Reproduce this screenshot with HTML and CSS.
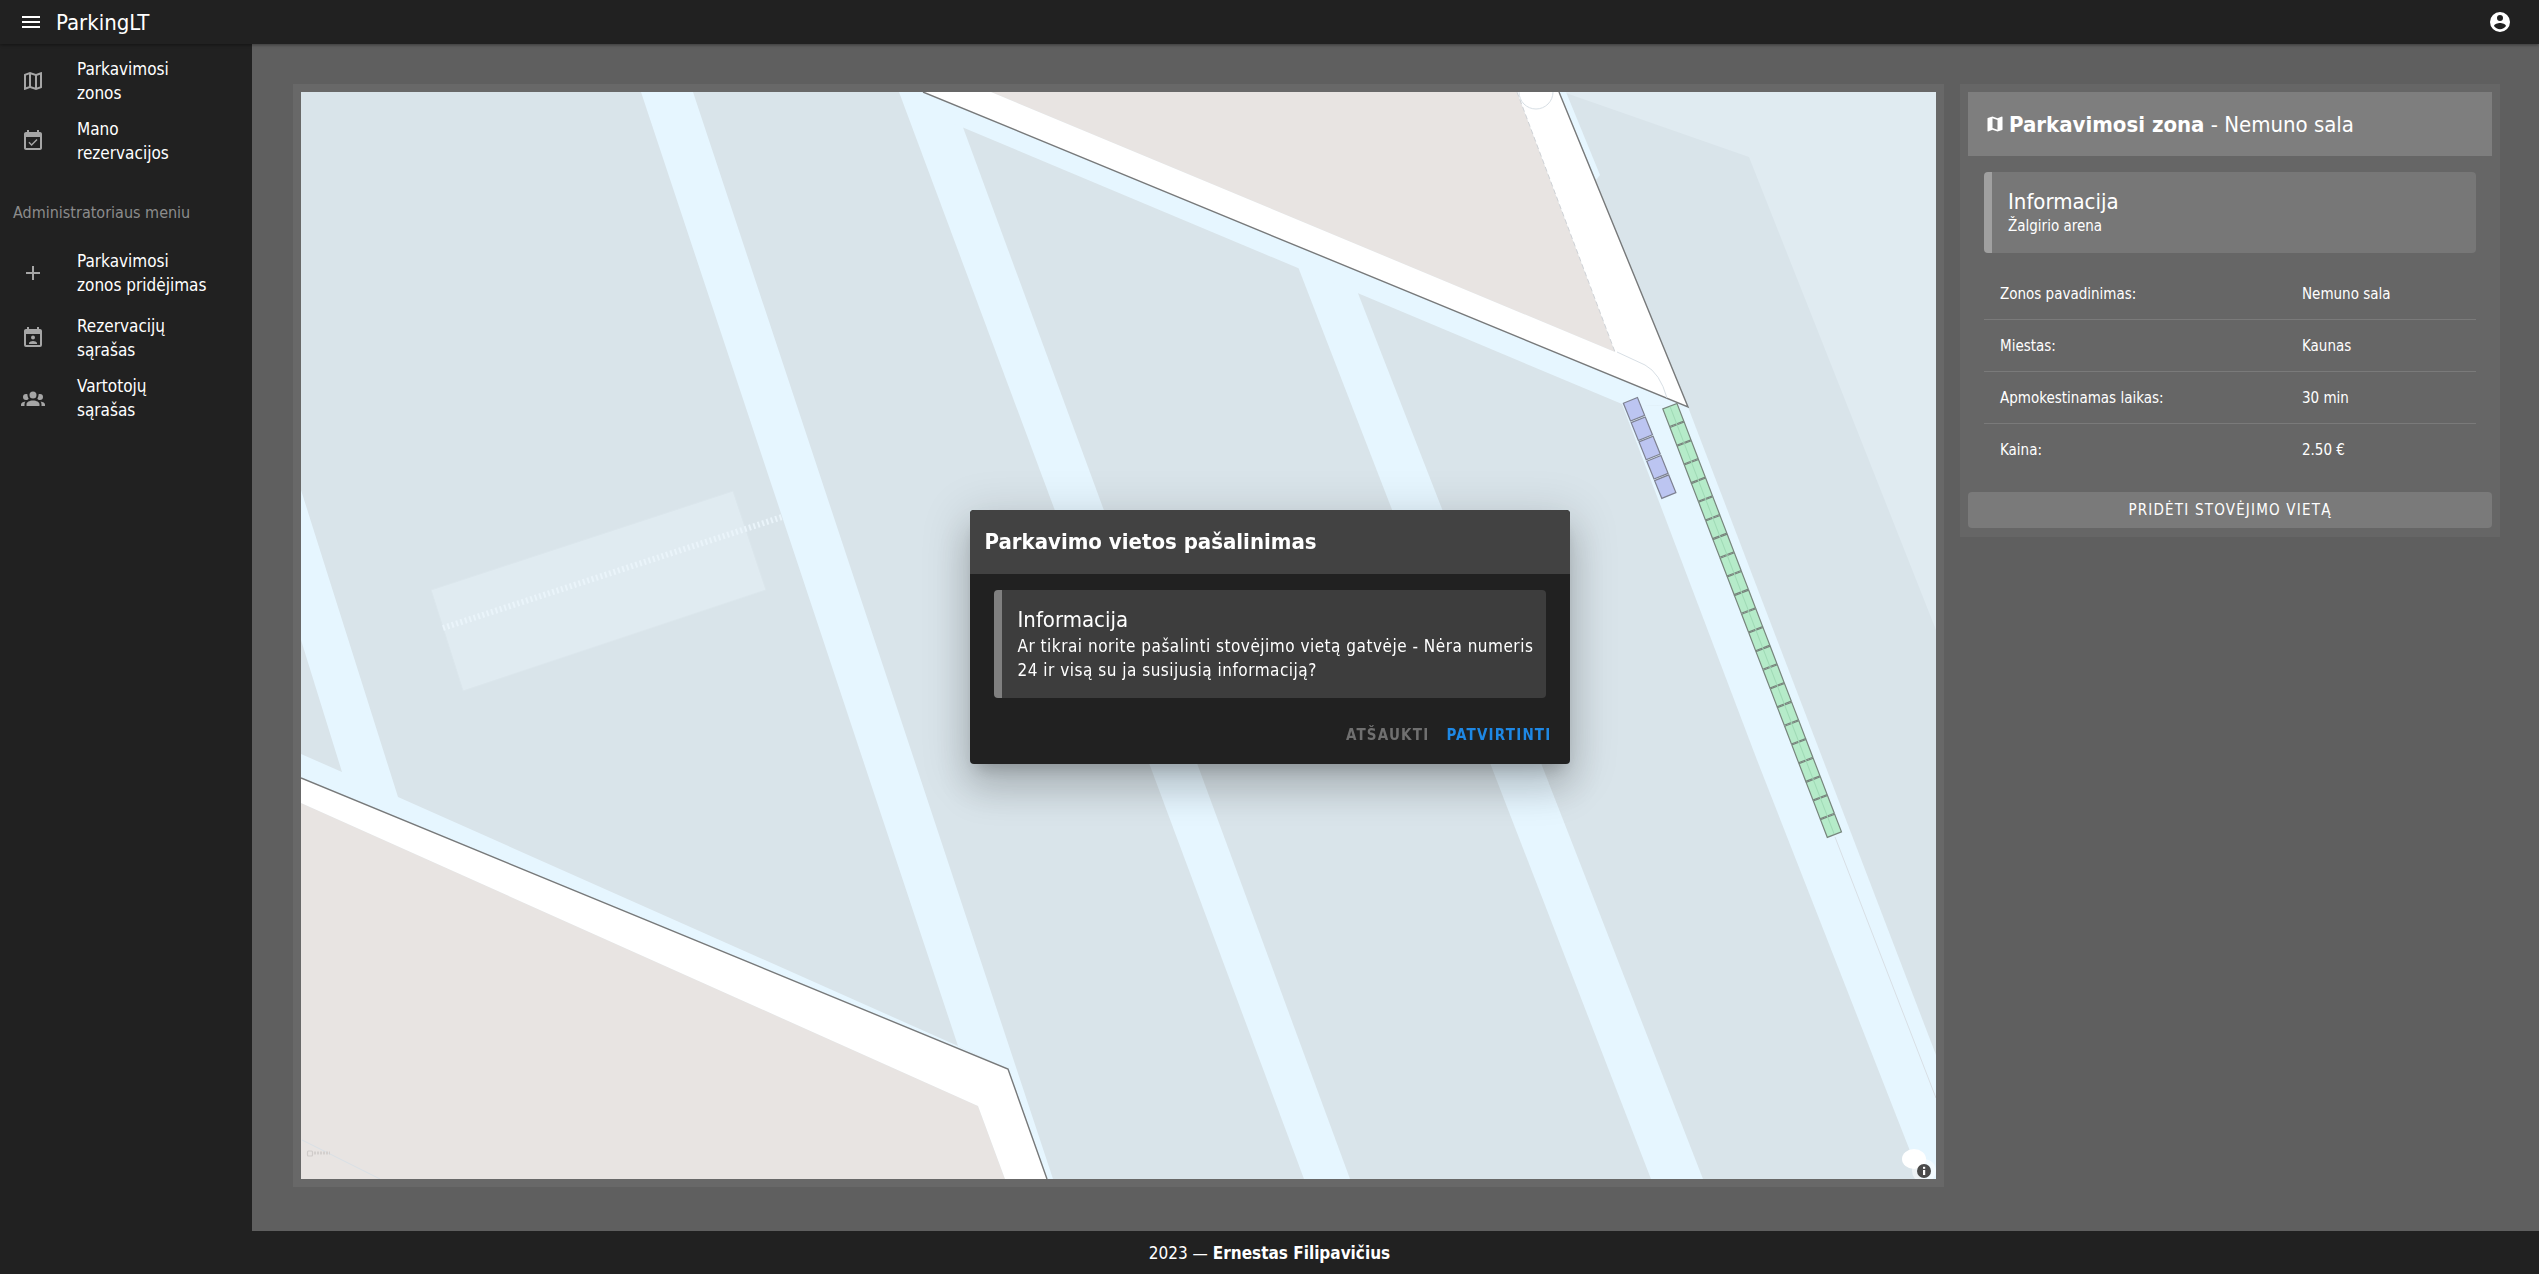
FILE: index.html
```html
<!DOCTYPE html>
<html lang="lt">
<head>
  <meta charset="UTF-8" />
  <title>ParkingLT</title>
  <link rel="stylesheet" href="styles.css">
</head>
<body>
  <div class="app">
    <header class="header">
      <div class="header-left">
        <svg class="header-menu" viewBox="0 0 24 24"><path d="M3,6H21V8H3V6M3,11H21V13H3V11M3,16H21V18H3V16Z"/></svg>
        <span class="logo">ParkingLT</span>
      </div>
      <svg class="header-user" viewBox="0 0 24 24"><path d="M12,19.2C9.5,19.2 7.29,17.92 6,16C6.03,14 10,12.9 12,12.9C14,12.9 17.97,14 18,16C16.71,17.92 14.5,19.2 12,19.2M12,5A3,3 0 0,1 15,8A3,3 0 0,1 12,11A3,3 0 0,1 9,8A3,3 0 0,1 12,5M12,2A10,10 0 0,0 2,12A10,10 0 0,0 12,22A10,10 0 0,0 22,12A10,10 0 0,0 12,2Z"/></svg>
    </header>

    <div class="body">
      <nav class="sidebar">
        <a class="nav-item">
          <svg class="nav-icon" viewBox="0 0 24 24"><path d="M20.5,3L20.34,3.03L15,5.1L9,3L3.36,4.9C3.15,4.97 3,5.15 3,5.38V20.5A0.5,0.5 0 0,0 3.5,21L3.66,20.97L9,18.9L15,21L20.64,19.1C20.85,19.03 21,18.85 21,18.62V3.5A0.5,0.5 0 0,0 20.5,3M10,5.47L14,6.87V18.53L10,17.13V5.47M5,6.46L8,5.45V17.15L5,18.31V6.46M19,17.54L16,18.55V6.86L19,5.7V17.54Z"/></svg>
          <span class="nav-text">Parkavimosi zonos</span>
        </a>
        <a class="nav-item">
          <svg class="nav-icon" viewBox="0 0 24 24"><path d="M19 3h-1V1h-2v2H8V1H6v2H5c-1.11 0-1.99.9-1.99 2L3 19c0 1.1.89 2 2 2h14c1.1 0 2-.9 2-2V5c0-1.1-.9-2-2-2zm0 16H5V8h14v11zM16.53 11.06L15.47 10l-4.88 4.88-2.12-2.12-1.06 1.06L10.59 17l5.94-5.94z"/></svg>
          <span class="nav-text">Mano rezervacijos</span>
        </a>
        <div class="nav-sub">Administratoriaus meniu</div>
        <a class="nav-item nav-item-tall">
          <svg class="nav-icon" viewBox="0 0 24 24"><path d="M19,13H13V19H11V13H5V11H11V5H13V11H19V13Z"/></svg>
          <span class="nav-text">Parkavimosi zonos pridėjimas</span>
        </a>
        <a class="nav-item">
          <svg class="nav-icon" viewBox="0 0 24 24"><path d="M19 3h-1V1h-2v2H8V1H6v2H5c-1.11 0-2 .9-2 2v14a2 2 0 0 0 2 2h14a2 2 0 0 0 2-2V5c0-1.1-.9-2-2-2zm0 16H5V8h14v11z"/><circle cx="12" cy="11.6" r="2"/><path d="M8 18v-1c0-1.3 2.7-2 4-2s4 .7 4 2v1z"/></svg>
          <span class="nav-text">Rezervacijų sąrašas</span>
        </a>
        <a class="nav-item">
          <svg class="nav-icon" viewBox="0 0 24 24"><path d="M12,5.5A3.5,3.5 0 0,1 15.5,9A3.5,3.5 0 0,1 12,12.5A3.5,3.5 0 0,1 8.5,9A3.5,3.5 0 0,1 12,5.5M5,8C5.56,8 6.08,8.15 6.53,8.42C6.38,9.85 6.8,11.27 7.66,12.38C7.16,13.34 6.16,14 5,14A3,3 0 0,1 2,11A3,3 0 0,1 5,8M19,8A3,3 0 0,1 22,11A3,3 0 0,1 19,14C17.84,14 16.84,13.34 16.34,12.38C17.2,11.27 17.62,9.85 17.47,8.42C17.92,8.15 18.44,8 19,8M5.5,18.25C5.5,16.18 8.41,14.5 12,14.5C15.59,14.5 18.5,16.18 18.5,18.25V20H5.5V18.25M0,20V18.5C0,17.11 1.89,15.94 4.45,15.6C3.86,16.28 3.5,17.22 3.5,18.25V20H0M24,20H20.5V18.25C20.5,17.22 20.14,16.28 19.55,15.6C22.11,15.94 24,17.11 24,18.5V20Z"/></svg>
          <span class="nav-text">Vartotojų sąrašas</span>
        </a>
      </nav>

      <main class="main">
        <section class="map-card">
          <div class="map">
            <svg class="map-svg" viewBox="301 92 1635 1087">
              <rect class="m-ground" x="301" y="92" width="1635" height="1087"/>
              <polygon class="m-pale" points="1563,92 1749,157 1936,630 1936,92"/>
              <polygon class="m-pale m-edge" points="733,491 766,590 463,691 431,590"/>
              <line class="m-dash" x1="443" y1="628" x2="782" y2="517"/>

              <polygon class="m-path" points="641,92 693,92 1053,1179 1040,1179 1008,1069 958,1046"/>
              <polygon class="m-path" points="899,92 950,92 1350,1179 1304,1179"/>
              <polygon class="m-path" points="1295,259 1354,283 1703,1179 1651,1179"/>
              <polygon class="m-path" points="1622,404 1688,407 1936,1055 1936,1179 1921,1179 1757,760"/>
              <polygon class="m-path" points="301,490 398,797 958,1046 1008,1069 1000,1080 301,778 301,754 342,772 301,640"/>
              <polygon class="m-path" points="923,92 945,92 1688,407 1622,404 945,120"/>
              <polygon class="m-path" points="1559,92 1566,92 1600,175 1596,180"/>

              <polygon class="m-sand" points="991,92 1517,92 1615,352"/>
              <polygon class="m-sand" points="301,803 978,1106 1005,1179 301,1179"/>
              <polygon class="m-road" points="923,92 991,92 1615,352 1517,92 1559,92 1688,407"/>
              <polygon class="m-road" points="301,778 1008,1069 1047,1179 1005,1179 978,1106 301,803"/>

              <polyline class="m-line" points="923,92 1688,407 1559,92"/>
              <polyline class="m-line" points="301,778 1008,1069 1047,1179"/>
              <line class="m-beige-dash" x1="1517" y1="92" x2="1615" y2="352"/>
              <path class="m-faint" d="M1519,92a17,17 0 0,0 34,0"/>
              <path class="m-faint" d="M1617,352L1645,365Q1660,373 1667,398"/>
              <line class="m-faint" x1="1835" y1="837" x2="1936" y2="1098"/>
              <line class="m-faint" x1="302" y1="1140" x2="380" y2="1179"/>

              <g class="spot-blue" transform="translate(1634 409.3) rotate(-22)">
                <rect x="-7.6" y="-9.6" width="15.2" height="19.2"/>
                <rect x="-7.6" y="11.3" width="15.2" height="19.2"/>
                <rect x="-7.6" y="32.1" width="15.2" height="19.2"/>
                <rect x="-7.6" y="53" width="15.2" height="19.2"/>
                <rect x="-7.6" y="73.8" width="15.2" height="19.2"/>
              </g>
              <g class="spot-green" transform="translate(1673.3 415) rotate(-21)">
                <rect x="-7.6" y="-9.5" width="15.2" height="19"/>
                <rect x="-7.6" y="10.5" width="15.2" height="19"/>
                <rect x="-7.6" y="30.5" width="15.2" height="19"/>
                <rect x="-7.6" y="50.5" width="15.2" height="19"/>
                <rect x="-7.6" y="70.5" width="15.2" height="19"/>
                <rect x="-7.6" y="90.5" width="15.2" height="19"/>
                <rect x="-7.6" y="110.5" width="15.2" height="19"/>
                <rect x="-7.6" y="130.5" width="15.2" height="19"/>
                <rect x="-7.6" y="150.5" width="15.2" height="19"/>
                <rect x="-7.6" y="170.5" width="15.2" height="19"/>
                <rect x="-7.6" y="190.5" width="15.2" height="19"/>
                <rect x="-7.6" y="210.5" width="15.2" height="19"/>
                <rect x="-7.6" y="230.5" width="15.2" height="19"/>
                <rect x="-7.6" y="250.5" width="15.2" height="19"/>
                <rect x="-7.6" y="270.5" width="15.2" height="19"/>
                <rect x="-7.6" y="290.5" width="15.2" height="19"/>
                <rect x="-7.6" y="310.5" width="15.2" height="19"/>
                <rect x="-7.6" y="330.5" width="15.2" height="19"/>
                <rect x="-7.6" y="350.5" width="15.2" height="19"/>
                <rect x="-7.6" y="370.5" width="15.2" height="19"/>
                <rect x="-7.6" y="390.5" width="15.2" height="19"/>
                <rect x="-7.6" y="410.5" width="15.2" height="19"/>
                <rect x="-7.6" y="430.5" width="15.2" height="19"/>
                <line class="spot-mid" x1="0" y1="-9" x2="0" y2="449"/>
              </g>

              <rect class="m-logo" x="307.5" y="1151" width="5" height="5" rx="1"/>
              <line class="m-logo-text" x1="314" y1="1153" x2="330" y2="1153"/>

              <ellipse class="m-blob" cx="1914" cy="1159" rx="12" ry="10"/>
              <circle class="m-blob-soft" cx="1924" cy="1171" r="12"/>
              <circle class="m-info" cx="1924" cy="1171" r="7"/>
              <rect class="m-info-i" x="1923" y="1170" width="2.2" height="5"/>
              <rect class="m-info-i" x="1923" y="1166.8" width="2.2" height="2"/>
            </svg>
          </div>
        </section>

        <aside class="panel">
          <div class="panel-title">
            <svg class="panel-icon" viewBox="0 0 24 24"><path d="M15,19L9,16.89V5L15,7.11M20.5,3C20.44,3 20.39,3 20.34,3L15,5.1L9,3L3.36,4.9C3.15,4.97 3,5.15 3,5.38V20.5A0.5,0.5 0 0,0 3.5,21C3.55,21 3.61,21 3.66,20.97L9,18.9L15,21L20.64,19.1C20.85,19 21,18.85 21,18.62V3.5A0.5,0.5 0 0,0 20.5,3Z"/></svg>
            <b>Parkavimosi zona</b>&nbsp;- Nemuno sala
          </div>
          <div class="panel-body">
            <div class="info panel-info">
              <div class="info-title">Informacija</div>
              <div class="info-text">Žalgirio arena</div>
            </div>
            <div class="rows">
              <div class="row"><span>Zonos pavadinimas:</span><span>Nemuno sala</span></div>
              <div class="row"><span>Miestas:</span><span>Kaunas</span></div>
              <div class="row"><span>Apmokestinamas laikas:</span><span>30 min</span></div>
              <div class="row"><span>Kaina:</span><span>2.50 €</span></div>
            </div>
          </div>
          <button class="panel-btn">PRIDĖTI STOVĖJIMO VIETĄ</button>
        </aside>
      </main>
    </div>

    <footer class="footer">2023 —&nbsp;<b>Ernestas Filipavičius</b></footer>
  </div>

  <div class="overlay">
    <div class="dialog">
      <div class="dialog-title">Parkavimo vietos pašalinimas</div>
      <div class="dialog-body">
        <div class="info dialog-info">
          <div class="info-title">Informacija</div>
          <div class="dialog-text">Ar tikrai norite pašalinti stovėjimo vietą gatvėje - Nėra numeris 24 ir visą su ja susijusią informaciją?</div>
        </div>
      </div>
      <div class="dialog-actions">
        <button class="dialog-btn cancel">ATŠAUKTI</button>
        <button class="dialog-btn confirm">PATVIRTINTI</button>
      </div>
    </div>
  </div>
</body>
</html>
```

FILE: styles.css
```css
* { box-sizing: border-box; }
body {
  margin: 0;
  background: #5f5f5f;
  color: #fff;
  font-family: "Liberation Sans Narrow", "DejaVu Sans Condensed", "Liberation Sans", sans-serif;
  overflow: hidden;
}
.app {
  display: flex;
  flex-direction: column;
  height: 1274px;
}
.header {
  height: 44px;
  flex: none;
  background: #212121;
  display: flex;
  align-items: center;
  justify-content: space-between;
  padding: 0 27px 0 19px;
  box-shadow: 0 1px 3px #0006;
  position: relative;
  z-index: 2;
}
.header-left { display: flex; align-items: center; gap: 13px; }
.header-menu { width: 24px; height: 24px; fill: #fff; }
.header-user { width: 24px; height: 24px; fill: #fff; }
.logo { font-size: 22px; }

.body { flex: 1; display: flex; min-height: 0; }
.sidebar {
  width: 252px;
  flex: none;
  background: #212121;
  padding-top: 7px;
}
.nav-item {
  display: flex;
  align-items: center;
  height: 60px;
  padding: 0 21px;
}
.nav-item-tall { height: 71px; }
.nav-icon { width: 24px; height: 24px; fill: #a6a6a6; flex: none; margin-right: 32px; }
.nav-text { font-size: 17px; line-height: 24px; width: 130px; }
.nav-sub {
  margin-top: 18px;
  height: 48px;
  padding-left: 13px;
  font-size: 16px;
  line-height: 48px;
  color: #8c8c8c;
}

.main {
  flex: 1;
  display: grid;
  grid-template-columns: 1651px 540px;
  gap: 16px;
  padding: 40px 0 44px 41px;
  align-items: start;
}
.map-card { background: #686868; padding: 8px; height: 1103px; }
.map { height: 1087px; }
.map-svg { display: block; width: 1635px; height: 1087px; }

.m-ground { fill: #d9e4ea; }
.m-pale { fill: #e0ebf1; }
.m-edge { stroke: #dbe6ec; stroke-width: 1; }
.m-dash { stroke: #eaf4fa; stroke-width: 6; stroke-dasharray: 2 2.6; }
.m-path { fill: #e6f6ff; }
.m-sand { fill: #e8e4e2; }
.m-road { fill: #fff; }
.m-line { fill: none; stroke: #77797a; stroke-width: 1.4; }
.m-beige-dash { stroke: #cfd2d6; stroke-width: 1; stroke-dasharray: 5 3; }
.m-faint { fill: none; stroke: #d8dfe5; stroke-width: 1; }
.spot-blue rect { fill: #bcc5f1; stroke: #7d8090; stroke-width: 1.2; }
.spot-green rect { fill: #b5ebc9; stroke: #77857c; stroke-width: 1.2; }
.spot-mid { stroke: #9fd9b5; stroke-width: 1; }
.m-logo { fill: none; stroke: #cfcbc9; stroke-width: 1.2; }
.m-logo-text { stroke: #d3cfcd; stroke-width: 3; stroke-dasharray: 2 1; }
.m-blob { fill: #fff; }
.m-blob-soft { fill: #ffffff88; }
.m-info { fill: #4a4a4a; }
.m-info-i { fill: #fff; }

.panel { background: #666; padding: 8px; height: 453px; }
.panel-title {
  height: 64px;
  background: #7e7e7e;
  display: flex;
  align-items: center;
  padding-left: 17px;
  font-size: 22px;
}
.panel-icon { width: 20px; height: 20px; fill: #fff; margin-right: 4px; flex: none; }
.panel-body { padding: 16px 16px 0; }
.info {
  background: #777;
  border-left: 8px solid #a0a0a0;
  border-radius: 4px;
  padding-left: 16px;
}
.panel-info { height: 81px; padding-top: 16px; }
.info-title { font-size: 22px; line-height: 28px; }
.info-text { font-size: 15px; line-height: 20px; }
.rows { margin-top: 15px; }
.row {
  height: 52px;
  display: grid;
  grid-template-columns: 302px 1fr;
  align-items: center;
  padding-left: 16px;
  font-size: 15px;
  border-bottom: 1px solid #7a7a7a;
}
.row:last-child { border-bottom: none; }
.panel-btn {
  display: block;
  width: 100%;
  height: 36px;
  margin-top: 16px;
  border: none;
  border-radius: 4px;
  background: #7a7a7a;
  color: #fff;
  font-family: inherit;
  font-size: 15px;
  letter-spacing: 1.2px;
}

.footer {
  height: 43px;
  flex: none;
  background: #212121;
  display: flex;
  align-items: center;
  justify-content: center;
  font-size: 17px;
}

.overlay {
  position: fixed;
  inset: 0;
  display: flex;
  align-items: center;
  justify-content: center;
  z-index: 5;
}
.dialog {
  width: 600px;
  height: 254px;
  background: #212121;
  border-radius: 4px;
  overflow: hidden;
  box-shadow: 0 11px 15px -7px #0003, 0 24px 38px 3px #00000024, 0 9px 46px 8px #0000001f;
}
.dialog-title {
  height: 64px;
  background: #424242;
  padding-left: 15px;
  line-height: 64px;
  font-size: 22px;
  font-weight: bold;
}
.dialog-body { padding: 16px 24px 0; }
.dialog-info {
  height: 108px;
  background: #3d3d3d;
  border-left-color: #808080;
  padding-top: 16px;
}
.dialog-text { font-size: 17px; line-height: 24px; letter-spacing: .5px; }
.dialog-actions {
  display: flex;
  justify-content: flex-end;
  gap: 17px;
  padding: 28px 18px 0 0;
}
.dialog-btn {
  border: none;
  background: none;
  padding: 0;
  font-family: inherit;
  font-size: 15px;
  font-weight: bold;
  letter-spacing: 1.2px;
}
.cancel { color: #707070; }
.confirm { color: #1e88e5; }
```
